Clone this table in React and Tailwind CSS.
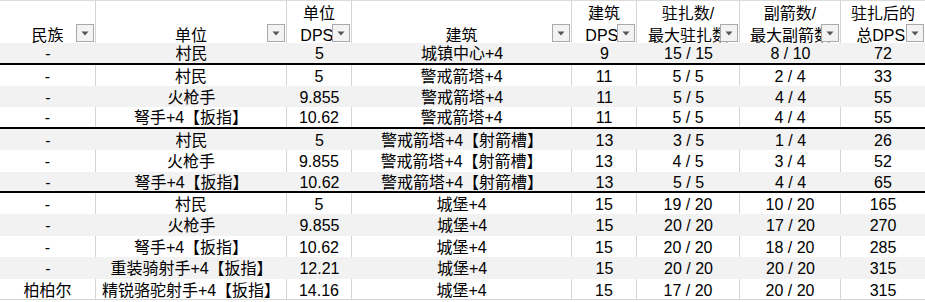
import React from "react";

const COLS = "grid-cols-[96px_191px_65px_220px_65px_103px_101px_84px]";

const headers = [
  ["", "民族"],
  ["", "单位"],
  ["单位", "DPS:"],
  ["", "建筑"],
  ["建筑", "DPS:"],
  ["驻扎数/", "最大驻扎数"],
  ["副箭数/", "最大副箭数"],
  ["驻扎后的", "总DPS:"],
];

const rows = [
  { h: "h-[22px]", thick: true, d: ["-", "村民", "5", "城镇中心+4", "9", "15 / 15", "8 / 10", "72"] },
  { h: "h-[21px]", d: ["-", "村民", "5", "警戒箭塔+4", "11", "5 / 5", "2 / 4", "33"] },
  { h: "h-[21px]", d: ["-", "火枪手", "9.855", "警戒箭塔+4", "11", "5 / 5", "4 / 4", "55"] },
  { h: "h-[22px]", thick: true, d: ["-", "弩手+4【扳指】", "10.62", "警戒箭塔+4", "11", "5 / 5", "4 / 4", "55"] },
  { h: "h-[21px]", d: ["-", "村民", "5", "警戒箭塔+4【射箭槽】", "13", "3 / 5", "1 / 4", "26"] },
  { h: "h-[22px]", d: ["-", "火枪手", "9.855", "警戒箭塔+4【射箭槽】", "13", "4 / 5", "3 / 4", "52"] },
  { h: "h-[21px]", thick: true, d: ["-", "弩手+4【扳指】", "10.62", "警戒箭塔+4【射箭槽】", "13", "5 / 5", "4 / 4", "65"] },
  { h: "h-[21px]", d: ["-", "村民", "5", "城堡+4", "15", "19 / 20", "10 / 20", "165"] },
  { h: "h-[22px]", d: ["-", "火枪手", "9.855", "城堡+4", "15", "20 / 20", "17 / 20", "270"] },
  { h: "h-[21px]", d: ["-", "弩手+4【扳指】", "10.62", "城堡+4", "15", "20 / 20", "18 / 20", "285"] },
  { h: "h-[22px]", d: ["-", "重装骑射手+4【扳指】", "12.21", "城堡+4", "15", "20 / 20", "20 / 20", "315"] },
  { h: "h-[21px]", last: true, d: ["柏柏尔", "精锐骆驼射手+4【扳指】", "14.16", "城堡+4", "15", "17 / 20", "20 / 20", "315"] },
];

function FilterButton() {
  return (
    <div className="absolute right-[1px] bottom-[1px] w-[18px] h-[18px] border border-[#a9a9a9] bg-[#f3f3f3] flex items-center justify-center">
      <svg width="8" height="5" viewBox="0 0 8 5">
        <polygon points="0.5,0.5 7.5,0.5 4,4.5" fill="#555555" />
      </svg>
    </div>
  );
}

export default function App() {
  return (
    <div
      className="w-[925px] h-[302px] overflow-hidden bg-white text-black text-[16px]"
      style={{ fontFamily: '"Liberation Sans", "Noto Sans CJK SC", sans-serif' }}
    >
      <div className={`grid ${COLS} h-[43px] border-t border-[#dcdcdc]`}>
        {headers.map((h, i) => (
          <div
            key={i}
            className={`relative overflow-hidden pt-[2px] ${i < 7 ? "border-r border-[#d4d4d4]" : ""}`}
          >
            <div className="leading-[21.5px] h-[21.5px] text-center whitespace-nowrap">{h[0]}</div>
            <div className="leading-[21.5px] h-[21.5px] text-center whitespace-nowrap">{h[1]}</div>
            <FilterButton />
          </div>
        ))}
      </div>
      {rows.map((r, ri) => {
        const gray = ri % 2 === 0;
        return (
          <div
            key={ri}
            className={`grid ${COLS} ${r.h} ${gray ? "bg-[#f2f2f2]" : "bg-white"} ${
              r.thick ? "border-b-2 border-black" : ""
            } ${r.last ? "border-b border-[#d4d4d4]" : ""}`}
          >
            {r.d.map((c, ci) => (
              <div
                key={ci}
                className={`whitespace-nowrap text-center leading-[18px] ${
                  r.thick ? "pt-[2px]" : "pt-[3px]"
                } ${!gray && ci < 7 ? "border-r border-[#d4d4d4]" : ""}`}
              >
                {c}
              </div>
            ))}
          </div>
        );
      })}
    </div>
  );
}
